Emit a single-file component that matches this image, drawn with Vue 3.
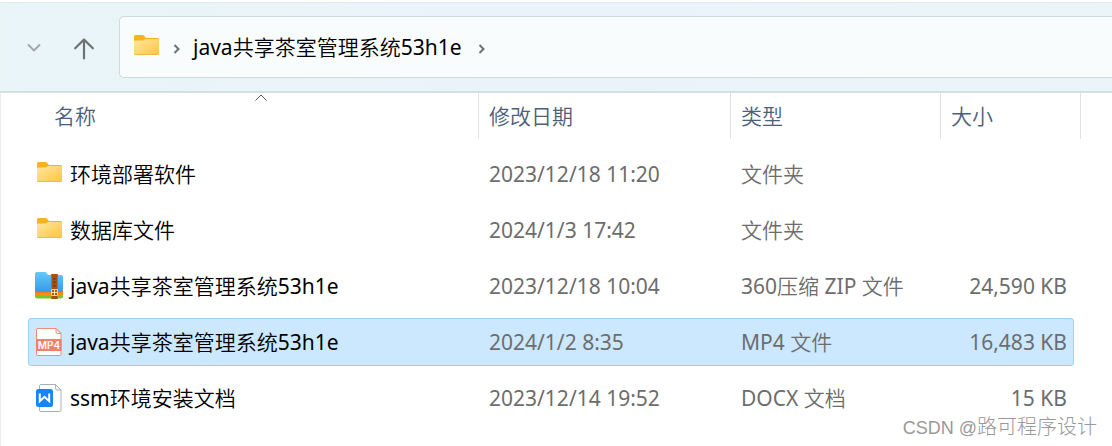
<script setup>
import { ref } from 'vue'

const folderName = 'java共享茶室管理系统53h1e'

const columns = [
  { key: 'name', label: '名称' },
  { key: 'date', label: '修改日期' },
  { key: 'type', label: '类型' },
  { key: 'size', label: '大小' },
]

const files = [
  { id: 1, icon: 'folder', name: '环境部署软件', date: '2023/12/18 11:20', type: '文件夹', size: '' },
  { id: 2, icon: 'folder', name: '数据库文件', date: '2024/1/3 17:42', type: '文件夹', size: '' },
  { id: 3, icon: 'zip', name: 'java共享茶室管理系统53h1e', date: '2023/12/18 10:04', type: '360压缩 ZIP 文件', size: '24,590 KB' },
  { id: 4, icon: 'mp4', name: 'java共享茶室管理系统53h1e', date: '2024/1/2 8:35', type: 'MP4 文件', size: '16,483 KB' },
  { id: 5, icon: 'docx', name: 'ssm环境安装文档', date: '2023/12/14 19:52', type: 'DOCX 文档', size: '15 KB' },
]

const selectedId = ref(4)
</script>

<template>
  <div class="explorer">
    <header class="toolbar">
      <button type="button" class="nav-button" aria-label="最近浏览的位置">
        <svg width="14" height="9" viewBox="0 0 14 9" fill="none" stroke="#a0a4a6" stroke-width="1.8">
          <path d="M1 1.5l6 6 6-6" />
        </svg>
      </button>
      <button type="button" class="nav-button up-button" aria-label="上移">
        <svg width="20" height="22" viewBox="0 0 20 22" fill="none" stroke="#6e7274" stroke-width="2.2" stroke-linecap="round" stroke-linejoin="round">
          <path d="M10 20.5V1.500M1.200 10.300L10 1.500l8.800 8.800" />
        </svg>
      </button>
      <nav class="address" aria-label="地址栏">
        <svg class="address-icon folder-icon" width="25" height="20" viewBox="0 0 25 20">
          <path d="M0 1.500Q0 0 1.500 0H8.500q.8 0 1.400.6L12 3H23.500Q25 3 25 4.500V9H0z" fill="#f9b21c" />
          <path d="M0 6.500Q0 5.500 1.500 5.500H8.500q.8 0 1.300-.6l.7-.6q.5-.3 1.200-.3H23.500Q25 4 25 5V18.500q0 1.500-1.500 1.500h-22Q0 20 0 18.500z" fill="url(#folder-fill)" />
          <path d="M.6 19.500H24.400" stroke="#eebb49" />
        </svg>
        <svg class="crumb-arrow" width="8" height="10" viewBox="0 0 8 10" fill="none" stroke="#6e7274" stroke-width="2">
          <path d="M1.500 1l4 4-4 4" />
        </svg>
        <button type="button" class="crumb">{{ folderName }}</button>
        <svg class="crumb-arrow" width="8" height="10" viewBox="0 0 8 10" fill="none" stroke="#6e7274" stroke-width="2">
          <path d="M1.500 1l4 4-4 4" />
        </svg>
      </nav>
    </header>

    <main class="content">
      <table class="file-table">
        <thead>
          <tr class="head-row">
            <th v-for="col in columns" :key="col.key" scope="col">
              <svg v-if="col.key === 'name'" class="sort-mark" width="12" height="7" viewBox="0 0 12 7" fill="none" stroke="#555">
                <path d="M.5 6.500L6 1l5.500 5.500" />
              </svg>
              <button type="button" class="head-button">{{ col.label }}</button>
            </th>
          </tr>
        </thead>
        <tbody>
          <tr
            v-for="file in files"
            :key="file.id"
            class="file-row"
            :class="{ 'is-selected': file.id === selectedId }"
            @click="selectedId = file.id"
          >
            <td class="name-cell">
              <span class="icon-slot">
                <svg v-if="file.icon === 'folder'" width="25" height="20" viewBox="0 0 25 20" class="folder-icon">
                  <path d="M0 1.500Q0 0 1.500 0H8.500q.8 0 1.400.6L12 3H23.500Q25 3 25 4.500V9H0z" fill="#f9b21c" />
                  <path d="M0 6.500Q0 5.500 1.500 5.500H8.500q.8 0 1.300-.6l.7-.6q.5-.3 1.200-.3H23.500Q25 4 25 5V18.500q0 1.500-1.500 1.500h-22Q0 20 0 18.500z" fill="url(#folder-fill)" />
                  <path d="M.6 19.500H24.400" stroke="#eebb49" />
                </svg>
                <svg v-else-if="file.icon === 'zip'" width="28" height="28" viewBox="0 0 28 28">
                  <path d="M0 20H28V24.500q0 2-2 2H2q-2 0-2-2z" fill="#7ac52c" />
                  <path d="M0 18H28v4q0 1.500-2 1.500H2q-2 0-2-1.500z" fill="#f98d12" />
                  <path d="M0 17.500H28v1.500q0 1.500-2 1.500H2q-2 0-2-1.500z" fill="#ef6b20" />
                  <path d="M0 2Q0 0 2 0H10q1.500 0 2 1.500.5 1.500 2 1.500H26q2 0 2 2V17q0 2-2 2H2q-2 0-2-2z" fill="url(#zip-fill)" />
                  <path d="M16 2h7v25h-7z" fill="#a74e13" />
                  <path d="M16.500 2v25M22.500 2v25" stroke="#be6924" />
                  <path d="M19.500 6v1.500M19.500 9.500v1.500M19.500 13v1.500" stroke="#6d300b" stroke-width="1.500" />
                  <path d="M16.500 17.500h6v6h-6z" fill="#a75817" stroke="#f2d692" />
                  <path d="M19.500 18v5M17 20.500h5" stroke="#ffe4a0" />
                </svg>
                <svg v-else-if="file.icon === 'mp4'" width="26" height="28" viewBox="0 0 26 28">
                  <path d="M2 .5H20L25 5.500V26q0 1.500-1.500 1.500H2Q.5 27.500.5 26V2Q.5.5 2 .5z" fill="#fff" stroke="#f28b79" />
                  <path d="M20 .5V4q0 1.500 1.500 1.500H25z" fill="#fff0ec" stroke="#f28b79" />
                  <path d="M0 11H25.500V23H0z" fill="#ef806b" />
                  <text x="13" y="20.500" text-anchor="middle" class="badge-text">MP4</text>
                </svg>
                <svg v-else width="26" height="28" viewBox="0 0 26 28">
                  <path d="M5 .5H19.500L25 6V26q0 1.500-1.500 1.500H5Q3.500 27.500 3.500 26V2Q3.500.5 5 .5z" fill="#fff" stroke="#a9afb8" />
                  <path d="M19.500.5V4.500q0 1.500 1.500 1.500h4z" fill="#f4f5f7" stroke="#a9afb8" />
                  <rect y="5" width="17" height="18" rx="2.500" fill="#1684fb" />
                  <path d="M3.800 9.500V17.200L8.500 12.800l4.700 4.400V9.500" fill="none" stroke="#fff" stroke-width="2" />
                </svg>
              </span>
              <span>{{ file.name }}</span>
            </td>
            <td>{{ file.date }}</td>
            <td>{{ file.type }}</td>
            <td class="size-cell">{{ file.size }}</td>
          </tr>
        </tbody>
      </table>
    </main>

    <div class="watermark"><span class="watermark-site">CSDN @</span>路可程序设计</div>

    <svg class="defs" width="0" height="0" aria-hidden="true">
      <defs>
        <linearGradient id="folder-fill" x1="0" y1="0" x2="1" y2="1">
          <stop offset="0" stop-color="#ffe7a2" />
          <stop offset="1" stop-color="#fdc63b" />
        </linearGradient>
        <linearGradient id="zip-fill" x1="0" y1="0" x2="0" y2="1">
          <stop offset="0" stop-color="#65c9fa" />
          <stop offset="1" stop-color="#379ceb" />
        </linearGradient>
      </defs>
    </svg>
  </div>
</template>

<style>
body {
  margin: 0;
  background: #fff;
}
</style>

<style scoped>
.explorer {
  position: relative;
  display: flex;
  flex-direction: column;
  box-sizing: border-box;
  min-height: 100vh;
  padding-top: 2px;
  overflow: hidden;
  background: #fff;
  font-family: "Noto Sans", "Noto Sans CJK SC DemiLight", "Noto Sans CJK SC", sans-serif;
  font-size: 21px;
  line-height: 28px;
}

svg {
  display: block;
  flex: none;
}

button {
  margin: 0;
  padding: 0;
  border: 0;
  background: none;
  color: inherit;
  font: inherit;
}

.toolbar {
  display: flex;
  align-items: center;
  padding: 13px 0 13px 22px;
  border-top: 1px solid #e2e8ea;
  border-bottom: 2px solid #d5dfe2;
  background: linear-gradient(90deg, #e9f5f7, #eaf3fa 45%, #ebf4f8);
}

.nav-button {
  display: grid;
  place-items: center;
  width: 24px;
  height: 32px;
}

.up-button {
  width: 28px;
  margin-left: 24px;
  padding-top: 4px;
}

.address {
  display: flex;
  flex: 1;
  align-items: center;
  box-sizing: border-box;
  height: 62px;
  margin-left: 21px;
  padding-left: 14px;
  border: 1px solid #d0d9dc;
  border-right: 0;
  border-radius: 5px 0 0 5px;
  background: #f8fcfd;
}

.folder-icon {
  margin-bottom: 4px;
}

.address-icon {
  margin-right: 14px;
}

.crumb-arrow {
  margin-top: 4px;
}

.crumb {
  margin: 0 16px 0 12px;
  color: #000;
  white-space: nowrap;
}

.content {
  flex: 1;
  border-left: 1px solid #ececec;
}

.file-table {
  display: block;
}

.file-table thead,
.file-table tbody {
  display: block;
}

.head-row,
.file-row {
  display: grid;
  grid-template-columns: minmax(280px, 1fr) 252px 210px 140px;
}

.head-row {
  margin: 0 31px 11px 43px;
  color: #4c607a;
}

.head-row th {
  position: relative;
  padding: 0;
  border-right: 1px solid #e2e2e2;
  font-weight: 300;
  text-align: left;
}

.head-button {
  width: 100%;
  height: 46px;
  padding-left: 10px;
  text-align: left;
}

.sort-mark {
  position: absolute;
  top: 1px;
  left: 50%;
  transform: translateX(-50%);
}

.file-row {
  grid-template-columns: minmax(280px, 1fr) 252px 210px 132px;
  align-items: center;
  box-sizing: border-box;
  height: 48px;
  margin: 0 38px 8px 27px;
  border: 1px solid transparent;
  border-radius: 3px;
  color: #6d6d6d;
}

.file-row.is-selected {
  border-color: #99d1ff;
  background: #cce8ff;
}

.file-row td {
  padding: 0 0 0 10px;
  white-space: nowrap;
}

.file-row .name-cell {
  display: flex;
  align-items: center;
  padding-left: 6px;
  color: #000;
}

.icon-slot {
  display: grid;
  place-items: center;
  width: 28px;
  height: 28px;
  margin-right: 7px;
}

.badge-text {
  fill: #fff;
  font-family: Inter, "Liberation Sans", sans-serif;
  font-size: 10px;
  font-weight: 600;
}

.file-row .size-cell {
  padding-right: 6px;
  text-align: right;
}

.watermark {
  position: absolute;
  right: 15px;
  bottom: 4px;
  color: #999;
  font-family: "Liberation Sans", "Noto Sans CJK SC", sans-serif;
  font-size: 20px;
  font-weight: 300;
}

.watermark-site {
  font-size: 18px;
}

.defs {
  position: absolute;
}
</style>
